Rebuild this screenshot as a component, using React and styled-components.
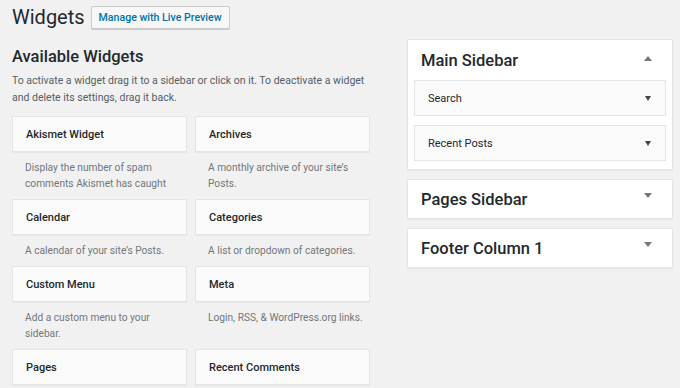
import React from "react";
import styled, { createGlobalStyle } from "styled-components";

const Global = createGlobalStyle`
  html, body { margin: 0; padding: 0; background: #f1f1f1; }
  body { font-family: Roboto, "Open Sans", sans-serif; color: #23282d; overflow: hidden; }
`;

const Page = styled.div`
  width: 680px;
  height: 388px;
  overflow: hidden;
  padding: 0 7px 0 12px;
  box-sizing: border-box;
  display: flex;
  gap: 38px;
  align-items: flex-start;
`;

const Left = styled.div`
  width: 357px;
  flex: none;
`;

const Right = styled.div`
  flex: 1;
  padding-top: 39px;
  display: flex;
  flex-direction: column;
  gap: 9px;
`;

const TitleRow = styled.div`
  display: flex;
  align-items: center;
  gap: 6px;
  height: 36px;
`;

const PageTitle = styled.h1`
  margin: 0;
  font-size: 20px;
  font-weight: 400;
  line-height: 36px;
  color: #23282d;
  position: relative;
  top: -1px;
`;

const Button = styled.button`
  font-family: inherit;
  font-size: 10.6px;
  font-weight: 500;
  color: #0073aa;
  background: #f7f7f7;
  border: 1px solid #cccccc;
  border-radius: 2px;
  height: 23px;
  padding: 0 7px;
  box-shadow: 0 1px 0 #ccc;
  margin-top: -1px;
`;

const SectionTitle = styled.h2`
  margin: 0;
  padding-top: 10px;
  font-size: 16.5px;
  font-weight: 500;
  line-height: 22px;
  color: #23282d;
`;

const Intro = styled.p`
  margin: 4px 0 0;
  font-size: 10.5px;
  line-height: 17px;
  color: #555d66;
`;

const Grid = styled.div`
  margin-top: 10px;
  display: grid;
  grid-template-columns: 175px 175px;
  column-gap: 8px;
`;

const Widget = styled.div``;

const Card = styled.div`
  height: 36px;
  box-sizing: border-box;
  background: #fafafa;
  border: 1px solid #e5e5e5;
  box-shadow: 0 1px 1px rgba(0, 0, 0, 0.04);
  display: flex;
  align-items: center;
  padding: 0 13px;
  font-size: 11px;
  font-weight: 500;
  color: #23282d;
`;

const Desc = styled.div`
  padding: 8px 4px 7px 13px;
  font-size: 10.2px;
  line-height: 16px;
  color: #72777c;
`;

const Panel = styled.div`
  background: #fff;
  border: 1px solid #e5e5e5;
  box-shadow: 0 1px 1px rgba(0, 0, 0, 0.04);
  padding: 0 6px ${(p) => (p.$open ? "8px" : "0")};
`;

const PanelHead = styled.div`
  height: ${(p) => (p.$open ? "40px" : "38px")};
  display: flex;
  align-items: center;
  justify-content: space-between;
  padding: 0 14px 0 7px;
  font-size: 16.5px;
  font-weight: 500;
  color: #23282d;
`;

const Arrow = styled.span`
  width: 0;
  height: 0;
  border-left: 4px solid transparent;
  border-right: 4px solid transparent;
  ${(p) =>
    p.$up
      ? "border-bottom: 5px solid #72777c;"
      : "border-top: 5px solid #72777c;"}
  position: relative;
  top: ${(p) => (p.$up ? "-2px" : "-4px")};
`;

const Inner = styled.div`
  display: flex;
  flex-direction: column;
  gap: 9px;
`;

const InnerWidget = styled.div`
  height: 36px;
  box-sizing: border-box;
  background: #fafafa;
  border: 1px solid #e5e5e5;
  display: flex;
  align-items: center;
  justify-content: space-between;
  padding: 0 14px 0 13px;
  font-size: 11px;
  font-weight: 400;
  color: #23282d;
`;

const SmallArrow = styled.span`
  width: 0;
  height: 0;
  border-left: 3.5px solid transparent;
  border-right: 3.5px solid transparent;
  border-top: 5px solid #444;
`;

const widgets = [
  ["Akismet Widget", "Display the number of spam comments Akismet has caught"],
  ["Archives", "A monthly archive of your site\u2019s Posts."],
  ["Calendar", "A calendar of your site\u2019s Posts."],
  ["Categories", "A list or dropdown of categories."],
  ["Custom Menu", "Add a custom menu to your sidebar."],
  ["Meta", "Login, RSS, & WordPress.org links."],
  ["Pages", null],
  ["Recent Comments", null],
];

export default function App() {
  return (
    <>
      <Global />
      <Page>
        <Left>
          <TitleRow>
            <PageTitle>Widgets</PageTitle>
            <Button>Manage with Live Preview</Button>
          </TitleRow>
          <SectionTitle>Available Widgets</SectionTitle>
          <Intro>
            To activate a widget drag it to a sidebar or click on it. To deactivate a widget
            and delete its settings, drag it back.
          </Intro>
          <Grid>
            {widgets.map(([t, d]) => (
              <Widget key={t}>
                <Card>{t}</Card>
                {d && <Desc>{d}</Desc>}
              </Widget>
            ))}
          </Grid>
        </Left>
        <Right>
          <Panel $open>
            <PanelHead $open>
              Main Sidebar
              <Arrow $up />
            </PanelHead>
            <Inner>
              <InnerWidget>
                Search
                <SmallArrow />
              </InnerWidget>
              <InnerWidget>
                Recent Posts
                <SmallArrow />
              </InnerWidget>
            </Inner>
          </Panel>
          <Panel>
            <PanelHead>
              Pages Sidebar
              <Arrow />
            </PanelHead>
          </Panel>
          <Panel>
            <PanelHead>
              Footer Column 1
              <Arrow />
            </PanelHead>
          </Panel>
        </Right>
      </Page>
    </>
  );
}
